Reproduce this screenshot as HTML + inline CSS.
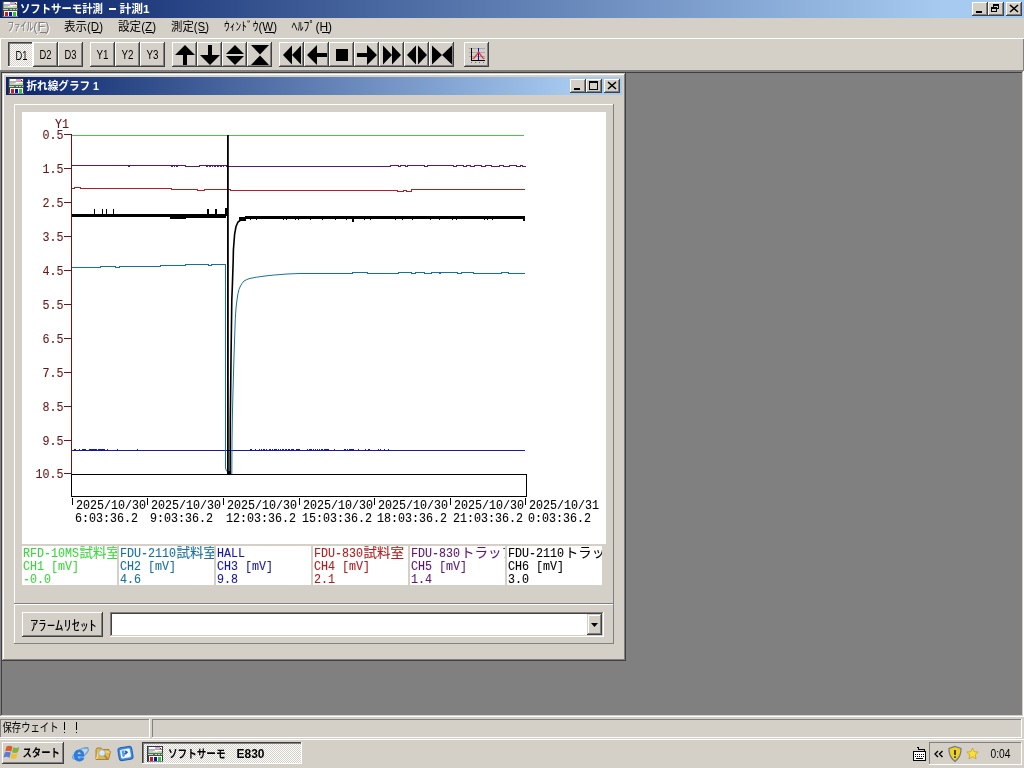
<!DOCTYPE html>
<html><head><meta charset="utf-8"><title>ソフトサーモ計測</title>
<style>
html,body{margin:0;padding:0;}
body{width:1024px;height:768px;overflow:hidden;position:relative;background:#D4D0C8;font-family:"Liberation Sans",sans-serif;}
div{position:absolute;box-sizing:border-box;}
svg{position:absolute;left:0;top:0;will-change:transform;}
</style></head><body>
<div style="left:0px;top:0px;width:1024px;height:18px;background:linear-gradient(to right,#0A246A,#A6CAF0 92%);"></div>
<div style="left:972px;top:2px;width:16px;height:14px;background:#D4D0C8;box-shadow:inset -1px -1px 0 #404040,inset 1px 1px 0 #FFFFFF,inset -2px -2px 0 #808080;"></div>
<div style="left:988px;top:2px;width:16px;height:14px;background:#D4D0C8;box-shadow:inset -1px -1px 0 #404040,inset 1px 1px 0 #FFFFFF,inset -2px -2px 0 #808080;"></div>
<div style="left:1006px;top:2px;width:16px;height:14px;background:#D4D0C8;box-shadow:inset -1px -1px 0 #404040,inset 1px 1px 0 #FFFFFF,inset -2px -2px 0 #808080;"></div>
<div style="left:0px;top:18px;width:1024px;height:20px;background:#D4D0C8;"></div>
<div style="left:0px;top:38px;width:1024px;height:1px;background:#FFFFFF;"></div>
<div style="left:0px;top:39px;width:1024px;height:31px;background:#D4D0C8;"></div>
<div style="left:1023px;top:39px;width:1px;height:31px;background:#808080;"></div>
<div style="left:0px;top:39px;width:1px;height:31px;background:#FFFFFF;"></div>
<div style="left:8px;top:42px;width:25px;height:25px;background:repeating-conic-gradient(#fff 0% 25%,#D4D0C8 0% 50%) 0 0/2px 2px;box-shadow:inset -1px -1px 0 #FFFFFF,inset 1px 1px 0 #404040,inset 2px 2px 0 #808080;"></div>
<div style="left:33px;top:42px;width:25px;height:25px;background:#D4D0C8;box-shadow:inset -1px -1px 0 #404040,inset 1px 1px 0 #FFFFFF,inset -2px -2px 0 #808080;"></div>
<div style="left:58px;top:42px;width:25px;height:25px;background:#D4D0C8;box-shadow:inset -1px -1px 0 #404040,inset 1px 1px 0 #FFFFFF,inset -2px -2px 0 #808080;"></div>
<div style="left:90px;top:42px;width:25px;height:25px;background:#D4D0C8;box-shadow:inset -1px -1px 0 #404040,inset 1px 1px 0 #FFFFFF,inset -2px -2px 0 #808080;"></div>
<div style="left:115px;top:42px;width:25px;height:25px;background:#D4D0C8;box-shadow:inset -1px -1px 0 #404040,inset 1px 1px 0 #FFFFFF,inset -2px -2px 0 #808080;"></div>
<div style="left:140px;top:42px;width:25px;height:25px;background:#D4D0C8;box-shadow:inset -1px -1px 0 #404040,inset 1px 1px 0 #FFFFFF,inset -2px -2px 0 #808080;"></div>
<div style="left:172px;top:42px;width:25px;height:25px;background:#D4D0C8;box-shadow:inset -1px -1px 0 #404040,inset 1px 1px 0 #FFFFFF,inset -2px -2px 0 #808080;"></div>
<div style="left:197px;top:42px;width:25px;height:25px;background:#D4D0C8;box-shadow:inset -1px -1px 0 #404040,inset 1px 1px 0 #FFFFFF,inset -2px -2px 0 #808080;"></div>
<div style="left:222px;top:42px;width:25px;height:25px;background:#D4D0C8;box-shadow:inset -1px -1px 0 #404040,inset 1px 1px 0 #FFFFFF,inset -2px -2px 0 #808080;"></div>
<div style="left:247px;top:42px;width:25px;height:25px;background:#D4D0C8;box-shadow:inset -1px -1px 0 #404040,inset 1px 1px 0 #FFFFFF,inset -2px -2px 0 #808080;"></div>
<div style="left:279px;top:42px;width:25px;height:25px;background:#D4D0C8;box-shadow:inset -1px -1px 0 #404040,inset 1px 1px 0 #FFFFFF,inset -2px -2px 0 #808080;"></div>
<div style="left:304px;top:42px;width:25px;height:25px;background:#D4D0C8;box-shadow:inset -1px -1px 0 #404040,inset 1px 1px 0 #FFFFFF,inset -2px -2px 0 #808080;"></div>
<div style="left:329px;top:42px;width:25px;height:25px;background:#D4D0C8;box-shadow:inset -1px -1px 0 #404040,inset 1px 1px 0 #FFFFFF,inset -2px -2px 0 #808080;"></div>
<div style="left:354px;top:42px;width:25px;height:25px;background:#D4D0C8;box-shadow:inset -1px -1px 0 #404040,inset 1px 1px 0 #FFFFFF,inset -2px -2px 0 #808080;"></div>
<div style="left:379px;top:42px;width:25px;height:25px;background:#D4D0C8;box-shadow:inset -1px -1px 0 #404040,inset 1px 1px 0 #FFFFFF,inset -2px -2px 0 #808080;"></div>
<div style="left:404px;top:42px;width:25px;height:25px;background:#D4D0C8;box-shadow:inset -1px -1px 0 #404040,inset 1px 1px 0 #FFFFFF,inset -2px -2px 0 #808080;"></div>
<div style="left:429px;top:42px;width:25px;height:25px;background:#D4D0C8;box-shadow:inset -1px -1px 0 #404040,inset 1px 1px 0 #FFFFFF,inset -2px -2px 0 #808080;"></div>
<div style="left:464px;top:42px;width:25px;height:25px;background:#D4D0C8;box-shadow:inset -1px -1px 0 #404040,inset 1px 1px 0 #FFFFFF,inset -2px -2px 0 #808080;"></div>
<div style="left:0px;top:70px;width:1024px;height:1px;background:#808080;"></div>
<div style="left:0px;top:71px;width:1024px;height:646px;background:#808080;box-shadow:inset -1px -1px 0 #FFFFFF,inset 1px 1px 0 #808080,inset -2px -2px 0 #D4D0C8,inset 2px 2px 0 #404040;"></div>
<div style="left:2px;top:73px;width:624px;height:588px;background:#D4D0C8;box-shadow:inset -1px -1px 0 #404040,inset 1px 1px 0 #D4D0C8,inset -2px -2px 0 #808080,inset 2px 2px 0 #FFFFFF;"></div>
<div style="left:6px;top:77px;width:616px;height:18px;background:linear-gradient(to right,#0A246A,#A6CAF0 92%);"></div>
<div style="left:570px;top:79px;width:16px;height:14px;background:#D4D0C8;box-shadow:inset -1px -1px 0 #404040,inset 1px 1px 0 #FFFFFF,inset -2px -2px 0 #808080;"></div>
<div style="left:586px;top:79px;width:16px;height:14px;background:#D4D0C8;box-shadow:inset -1px -1px 0 #404040,inset 1px 1px 0 #FFFFFF,inset -2px -2px 0 #808080;"></div>
<div style="left:604px;top:79px;width:16px;height:14px;background:#D4D0C8;box-shadow:inset -1px -1px 0 #404040,inset 1px 1px 0 #FFFFFF,inset -2px -2px 0 #808080;"></div>
<div style="left:14px;top:104px;width:600px;height:500px;box-shadow:inset -1px -1px 0 #808080,inset 1px 1px 0 #FFFFFF;"></div>
<div style="left:14px;top:604px;width:600px;height:40px;box-shadow:inset -1px -1px 0 #808080,inset 1px 1px 0 #FFFFFF;"></div>
<div style="left:22px;top:112px;width:584px;height:432px;background:#fff;"></div>
<div style="left:22px;top:546px;width:95px;height:39px;background:#fff;"></div>
<div style="left:119px;top:546px;width:95px;height:39px;background:#fff;"></div>
<div style="left:216px;top:546px;width:95px;height:39px;background:#fff;"></div>
<div style="left:313px;top:546px;width:95px;height:39px;background:#fff;"></div>
<div style="left:410px;top:546px;width:95px;height:39px;background:#fff;"></div>
<div style="left:507px;top:546px;width:95px;height:39px;background:#fff;"></div>
<div style="left:22px;top:612px;width:81px;height:25px;background:#D4D0C8;box-shadow:inset -1px -1px 0 #404040,inset 1px 1px 0 #FFFFFF,inset -2px -2px 0 #808080;"></div>
<div style="left:110px;top:612px;width:494px;height:25px;background:#fff;box-shadow:inset -1px -1px 0 #FFFFFF,inset 1px 1px 0 #808080,inset -2px -2px 0 #D4D0C8,inset 2px 2px 0 #404040;"></div>
<div style="left:587px;top:614px;width:15px;height:21px;background:#D4D0C8;box-shadow:inset -1px -1px 0 #404040,inset 1px 1px 0 #D4D0C8,inset -2px -2px 0 #808080,inset 2px 2px 0 #FFFFFF;"></div>
<div style="left:0px;top:717px;width:1024px;height:21px;background:#D4D0C8;"></div>
<div style="left:0px;top:719px;width:150px;height:19px;box-shadow:inset -1px -1px 0 #FFFFFF,inset 1px 1px 0 #808080;"></div>
<div style="left:152px;top:719px;width:870px;height:19px;box-shadow:inset -1px -1px 0 #FFFFFF,inset 1px 1px 0 #808080;"></div>
<div style="left:0px;top:738px;width:1024px;height:30px;background:#D4D0C8;"></div>
<div style="left:0px;top:739px;width:1024px;height:1px;background:#FFFFFF;"></div>
<div style="left:2px;top:742px;width:62px;height:22px;background:#D4D0C8;box-shadow:inset -1px -1px 0 #404040,inset 1px 1px 0 #FFFFFF,inset -2px -2px 0 #808080;"></div>
<div style="left:142px;top:742px;width:160px;height:22px;background:repeating-conic-gradient(#fff 0% 25%,#D4D0C8 0% 50%) 0 0/2px 2px;box-shadow:inset -1px -1px 0 #FFFFFF,inset 1px 1px 0 #404040,inset 2px 2px 0 #808080;"></div>
<div style="left:929px;top:742px;width:93px;height:23px;box-shadow:inset -1px -1px 0 #FFFFFF,inset 1px 1px 0 #808080;"></div>
<svg width="1024" height="768" viewBox="0 0 1024 768">
<g transform="translate(2,1)" shape-rendering="crispEdges"><rect x="0" y="0" width="16" height="16" fill="#303848"/><rect x="2" y="1" width="13" height="6" fill="#FFFFFF"/><rect x="1" y="1" width="1" height="6" fill="#8890A0"/><rect x="8" y="1" width="5" height="1" fill="#B8A8E8"/><rect x="13" y="2" width="1" height="1" fill="#402050"/><rect x="14" y="3" width="1" height="1" fill="#C06080"/><rect x="2" y="3" width="7" height="1" fill="#C8A0D8"/><rect x="8" y="2" width="5" height="1" fill="#D8B0D0"/><rect x="9" y="3" width="5" height="1" fill="#E09090"/><rect x="2" y="4" width="6" height="1" fill="#B8B0E0"/><rect x="2" y="5" width="13" height="2" fill="#A8E0A0"/><rect x="6" y="5" width="5" height="1" fill="#E8F0C0"/><rect x="1" y="7" width="15" height="1" fill="#607060"/><rect x="1" y="8" width="15" height="1" fill="#606870"/><rect x="1" y="8" width="1" height="1" fill="#C8D0D0"/><rect x="2" y="8" width="1" height="1" fill="#C8D0D0"/><rect x="3" y="8" width="1" height="1" fill="#C8D0D0"/><rect x="4" y="8" width="1" height="1" fill="#C8D0D0"/><rect x="5" y="8" width="1" height="1" fill="#C8D0D0"/><rect x="8" y="8" width="1" height="1" fill="#C8D0D0"/><rect x="9" y="8" width="1" height="1" fill="#C8D0D0"/><rect x="11" y="8" width="1" height="1" fill="#C8D0D0"/><rect x="12" y="8" width="1" height="1" fill="#C8D0D0"/><rect x="14" y="8" width="1" height="1" fill="#C8D0D0"/><rect x="1" y="9" width="15" height="1" fill="#505050"/><rect x="2" y="10" width="13" height="5" fill="#FFFFFF"/><rect x="1" y="10" width="1" height="5" fill="#503030"/><rect x="3" y="11" width="3" height="4" fill="#D01818"/><rect x="7" y="11" width="3" height="4" fill="#1010B0"/><rect x="11" y="11" width="3" height="4" fill="#20D020"/><rect x="1" y="15" width="15" height="1" fill="#8088A0"/></g>
<text x="20" y="13" font-family="'Liberation Sans','Noto Sans CJK JP',sans-serif" font-size="11.5" font-weight="bold" textLength="83" lengthAdjust="spacingAndGlyphs" fill="#fff">ソフトサーモ計測</text>
<rect x="109" y="8" width="7" height="2" fill="#fff"/>
<text x="119.500" y="13" font-family="'Liberation Sans','Noto Sans CJK JP',sans-serif" font-size="11.5" font-weight="bold" textLength="30" lengthAdjust="spacingAndGlyphs" fill="#fff">計測1</text>
<rect x="976" y="11" width="6" height="2" fill="#000"/>
<rect x="993.5" y="4.5" width="5" height="4" fill="none" stroke="#000"/>
<rect x="993" y="4" width="6" height="2" fill="#000"/>
<rect x="991.5" y="7.5" width="5" height="4" fill="#D4D0C8" stroke="#000"/>
<rect x="991" y="7" width="6" height="2" fill="#000"/>
<path d="M1010,5 l8,7 M1018,5 l-8,7" stroke="#000" stroke-width="1.6" fill="none" shape-rendering="auto"/>
<text x="8.500" y="32" font-family="'Liberation Sans','Noto Sans CJK JP',sans-serif" font-size="12" textLength="42" lengthAdjust="spacingAndGlyphs" fill="#fff">ﾌｧｲﾙ(F)</text>
<text x="7.500" y="31" font-family="'Liberation Sans','Noto Sans CJK JP',sans-serif" font-size="12" textLength="42" lengthAdjust="spacingAndGlyphs" fill="#808080">ﾌｧｲﾙ(F)</text>
<text x="64" y="31" font-family="'Liberation Sans','Noto Sans CJK JP',sans-serif" font-size="12" textLength="39" lengthAdjust="spacingAndGlyphs" fill="#000">表示(D)</text>
<text x="118" y="31" font-family="'Liberation Sans','Noto Sans CJK JP',sans-serif" font-size="12" textLength="38" lengthAdjust="spacingAndGlyphs" fill="#000">設定(Z)</text>
<text x="171" y="31" font-family="'Liberation Sans','Noto Sans CJK JP',sans-serif" font-size="12" textLength="38" lengthAdjust="spacingAndGlyphs" fill="#000">測定(S)</text>
<text x="224" y="31" font-family="'Liberation Sans','Noto Sans CJK JP',sans-serif" font-size="12" textLength="53" lengthAdjust="spacingAndGlyphs" fill="#000">ｳｨﾝﾄﾞｳ(W)</text>
<text x="291.500" y="31" font-family="'Liberation Sans','Noto Sans CJK JP',sans-serif" font-size="12" textLength="40.5" lengthAdjust="spacingAndGlyphs" fill="#000">ﾍﾙﾌﾟ(H)</text>
<rect x="40" y="32" width="6" height="1" fill="#808080"/>
<rect x="93" y="32" width="7" height="1" fill="#000"/>
<rect x="146" y="32" width="7" height="1" fill="#000"/>
<rect x="199" y="32" width="7" height="1" fill="#000"/>
<rect x="265" y="32" width="9" height="1" fill="#000"/>
<rect x="322" y="32" width="7" height="1" fill="#000"/>
<text x="21.5" y="60" font-family="Liberation Sans, sans-serif" font-size="12.5" text-anchor="middle" textLength="12" lengthAdjust="spacingAndGlyphs" fill="#000">D1</text>
<text x="45.5" y="59" font-family="Liberation Sans, sans-serif" font-size="12.5" text-anchor="middle" textLength="12" lengthAdjust="spacingAndGlyphs" fill="#000">D2</text>
<text x="70.5" y="59" font-family="Liberation Sans, sans-serif" font-size="12.5" text-anchor="middle" textLength="12" lengthAdjust="spacingAndGlyphs" fill="#000">D3</text>
<text x="102.5" y="59" font-family="Liberation Sans, sans-serif" font-size="12.5" text-anchor="middle" textLength="12" lengthAdjust="spacingAndGlyphs" fill="#000">Y1</text>
<text x="127.5" y="59" font-family="Liberation Sans, sans-serif" font-size="12.5" text-anchor="middle" textLength="12" lengthAdjust="spacingAndGlyphs" fill="#000">Y2</text>
<text x="152.5" y="59" font-family="Liberation Sans, sans-serif" font-size="12.5" text-anchor="middle" textLength="12" lengthAdjust="spacingAndGlyphs" fill="#000">Y3</text>
<polygon points="185,45 195,55 187,55 187,65 183,65 183,55 175,55" fill="#000"/>
<polygon points="208,45 212,45 212,55 220,55 210,65 200,55 208,55" fill="#000"/>
<polygon points="235,45 244,54 226,54" fill="#000"/>
<polygon points="226,56 244,56 235,65" fill="#000"/>
<polygon points="251,45 269,45 260,54.5" fill="#000"/>
<polygon points="260,55.5 269,65 251,65" fill="#000"/>
<polygon points="283,55 292,45.5 292,64.5" fill="#000"/>
<polygon points="292,55 301,45.5 301,64.5" fill="#000"/>
<polygon points="307,55 317,45 317,53 327,53 327,57 317,57 317,65" fill="#000"/>
<rect x="336" y="49" width="12" height="12" fill="#000"/>
<polygon points="357,53 367,53 367,45 377,55 367,65 367,57 357,57" fill="#000"/>
<polygon points="383,45.5 392,55 383,64.5" fill="#000"/>
<polygon points="392,45.5 401,55 392,64.5" fill="#000"/>
<polygon points="407,55 416,45.5 416,64.5" fill="#000"/>
<polygon points="418,45.5 427,55 418,64.5" fill="#000"/>
<polygon points="432,45.5 442,55 432,64.5" fill="#000"/>
<polygon points="452,45.5 442,55 452,64.5" fill="#000"/>
<g shape-rendering="crispEdges"><rect x="469" y="48" width="16" height="1" fill="#A8A8A8"/><rect x="469" y="52" width="16" height="1" fill="#A8A8A8"/><rect x="469" y="56" width="16" height="1" fill="#A8A8A8"/><rect x="471" y="48" width="1" height="13" fill="#000"/><rect x="471" y="60" width="14" height="1" fill="#000"/><rect x="471" y="62" width="1" height="1" fill="#707070"/><rect x="475" y="62" width="1" height="1" fill="#707070"/><rect x="479" y="62" width="1" height="1" fill="#707070"/><rect x="483" y="62" width="1" height="1" fill="#707070"/><rect x="478" y="48" width="1" height="12" fill="#1010C0"/></g><path d="M472.5,58.500 L474,58.200 L478.7,52.300 L483,58.200 L484.5,58.500" fill="none" stroke="#E83030" stroke-width="1.200"/>
<g transform="translate(8,78)" shape-rendering="crispEdges"><rect x="0" y="0" width="16" height="16" fill="#303848"/><rect x="2" y="1" width="13" height="6" fill="#FFFFFF"/><rect x="1" y="1" width="1" height="6" fill="#8890A0"/><rect x="8" y="1" width="5" height="1" fill="#B8A8E8"/><rect x="13" y="2" width="1" height="1" fill="#402050"/><rect x="14" y="3" width="1" height="1" fill="#C06080"/><rect x="2" y="3" width="7" height="1" fill="#C8A0D8"/><rect x="8" y="2" width="5" height="1" fill="#D8B0D0"/><rect x="9" y="3" width="5" height="1" fill="#E09090"/><rect x="2" y="4" width="6" height="1" fill="#B8B0E0"/><rect x="2" y="5" width="13" height="2" fill="#A8E0A0"/><rect x="6" y="5" width="5" height="1" fill="#E8F0C0"/><rect x="1" y="7" width="15" height="1" fill="#607060"/><rect x="1" y="8" width="15" height="1" fill="#606870"/><rect x="1" y="8" width="1" height="1" fill="#C8D0D0"/><rect x="2" y="8" width="1" height="1" fill="#C8D0D0"/><rect x="3" y="8" width="1" height="1" fill="#C8D0D0"/><rect x="4" y="8" width="1" height="1" fill="#C8D0D0"/><rect x="5" y="8" width="1" height="1" fill="#C8D0D0"/><rect x="8" y="8" width="1" height="1" fill="#C8D0D0"/><rect x="9" y="8" width="1" height="1" fill="#C8D0D0"/><rect x="11" y="8" width="1" height="1" fill="#C8D0D0"/><rect x="12" y="8" width="1" height="1" fill="#C8D0D0"/><rect x="14" y="8" width="1" height="1" fill="#C8D0D0"/><rect x="1" y="9" width="15" height="1" fill="#505050"/><rect x="2" y="10" width="13" height="5" fill="#FFFFFF"/><rect x="1" y="10" width="1" height="5" fill="#503030"/><rect x="3" y="11" width="3" height="4" fill="#D01818"/><rect x="7" y="11" width="3" height="4" fill="#1010B0"/><rect x="11" y="11" width="3" height="4" fill="#20D020"/><rect x="1" y="15" width="15" height="1" fill="#8088A0"/></g>
<text x="26.500" y="90" font-family="'Liberation Sans','Noto Sans CJK JP',sans-serif" font-size="11.5" font-weight="bold" textLength="72.5" lengthAdjust="spacingAndGlyphs" fill="#fff" xml:space="preserve">折れ線グラフ 1</text>
<rect x="574" y="88" width="6" height="2" fill="#000"/>
<rect x="589.5" y="81.5" width="8" height="8" fill="none" stroke="#000" stroke-width="1"/>
<rect x="589" y="81" width="9" height="2" fill="#000"/>
<path d="M608,82 l8,7 M616,82 l-8,7" stroke="#000" stroke-width="1.6" fill="none" shape-rendering="auto"/>
<clipPath id="lc0"><rect x="22" y="546" width="95" height="39"/></clipPath>
<g clip-path="url(#lc0)">
<text x="23" y="557" font-family="Liberation Mono, monospace" font-size="13" textLength="56" lengthAdjust="spacingAndGlyphs" fill="#40D440" stroke="#40D440" stroke-width="0.1" text-anchor="start" xml:space="preserve">RFD-10MS</text>
<text x="79.500" y="557" font-family="'Liberation Mono','Noto Sans CJK JP',monospace" font-size="13" textLength="40.5" lengthAdjust="spacingAndGlyphs" fill="#40D440" stroke="#40D440" stroke-width="0.1" text-anchor="start">試料室</text>
<text x="23" y="570" font-family="Liberation Mono, monospace" font-size="13" textLength="56" lengthAdjust="spacingAndGlyphs" fill="#40D440" stroke="#40D440" stroke-width="0.1" text-anchor="start" xml:space="preserve">CH1 [mV]</text>
<text x="23" y="583" font-family="Liberation Mono, monospace" font-size="13" textLength="28" lengthAdjust="spacingAndGlyphs" fill="#40D440" stroke="#40D440" stroke-width="0.1" text-anchor="start" xml:space="preserve">-0.0</text>
</g>
<clipPath id="lc1"><rect x="119" y="546" width="95" height="39"/></clipPath>
<g clip-path="url(#lc1)">
<text x="120" y="557" font-family="Liberation Mono, monospace" font-size="13" textLength="56" lengthAdjust="spacingAndGlyphs" fill="#1870A0" stroke="#1870A0" stroke-width="0.1" text-anchor="start" xml:space="preserve">FDU-2110</text>
<text x="176.500" y="557" font-family="'Liberation Mono','Noto Sans CJK JP',monospace" font-size="13" textLength="40.5" lengthAdjust="spacingAndGlyphs" fill="#1870A0" stroke="#1870A0" stroke-width="0.1" text-anchor="start">試料室</text>
<text x="120" y="570" font-family="Liberation Mono, monospace" font-size="13" textLength="56" lengthAdjust="spacingAndGlyphs" fill="#1870A0" stroke="#1870A0" stroke-width="0.1" text-anchor="start" xml:space="preserve">CH2 [mV]</text>
<text x="120" y="583" font-family="Liberation Mono, monospace" font-size="13" textLength="21" lengthAdjust="spacingAndGlyphs" fill="#1870A0" stroke="#1870A0" stroke-width="0.1" text-anchor="start" xml:space="preserve">4.6</text>
</g>
<clipPath id="lc2"><rect x="216" y="546" width="95" height="39"/></clipPath>
<g clip-path="url(#lc2)">
<text x="217" y="557" font-family="Liberation Mono, monospace" font-size="13" textLength="28" lengthAdjust="spacingAndGlyphs" fill="#1818A0" stroke="#1818A0" stroke-width="0.1" text-anchor="start" xml:space="preserve">HALL</text>
<text x="217" y="570" font-family="Liberation Mono, monospace" font-size="13" textLength="56" lengthAdjust="spacingAndGlyphs" fill="#1818A0" stroke="#1818A0" stroke-width="0.1" text-anchor="start" xml:space="preserve">CH3 [mV]</text>
<text x="217" y="583" font-family="Liberation Mono, monospace" font-size="13" textLength="21" lengthAdjust="spacingAndGlyphs" fill="#1818A0" stroke="#1818A0" stroke-width="0.1" text-anchor="start" xml:space="preserve">9.8</text>
</g>
<clipPath id="lc3"><rect x="313" y="546" width="95" height="39"/></clipPath>
<g clip-path="url(#lc3)">
<text x="314" y="557" font-family="Liberation Mono, monospace" font-size="13" textLength="49" lengthAdjust="spacingAndGlyphs" fill="#B02020" stroke="#B02020" stroke-width="0.1" text-anchor="start" xml:space="preserve">FDU-830</text>
<text x="363.500" y="557" font-family="'Liberation Mono','Noto Sans CJK JP',monospace" font-size="13" textLength="40.5" lengthAdjust="spacingAndGlyphs" fill="#B02020" stroke="#B02020" stroke-width="0.1" text-anchor="start">試料室</text>
<text x="314" y="570" font-family="Liberation Mono, monospace" font-size="13" textLength="56" lengthAdjust="spacingAndGlyphs" fill="#B02020" stroke="#B02020" stroke-width="0.1" text-anchor="start" xml:space="preserve">CH4 [mV]</text>
<text x="314" y="583" font-family="Liberation Mono, monospace" font-size="13" textLength="21" lengthAdjust="spacingAndGlyphs" fill="#B02020" stroke="#B02020" stroke-width="0.1" text-anchor="start" xml:space="preserve">2.1</text>
</g>
<clipPath id="lc4"><rect x="410" y="546" width="95" height="39"/></clipPath>
<g clip-path="url(#lc4)">
<text x="411" y="557" font-family="Liberation Mono, monospace" font-size="13" textLength="49" lengthAdjust="spacingAndGlyphs" fill="#5A1870" stroke="#5A1870" stroke-width="0.1" text-anchor="start" xml:space="preserve">FDU-830</text>
<text x="461" y="557" font-family="'Liberation Mono','Noto Sans CJK JP',monospace" font-size="13" textLength="54" lengthAdjust="spacingAndGlyphs" fill="#5A1870" stroke="#5A1870" stroke-width="0.1" text-anchor="start">トラップ</text>
<text x="411" y="570" font-family="Liberation Mono, monospace" font-size="13" textLength="56" lengthAdjust="spacingAndGlyphs" fill="#5A1870" stroke="#5A1870" stroke-width="0.1" text-anchor="start" xml:space="preserve">CH5 [mV]</text>
<text x="411" y="583" font-family="Liberation Mono, monospace" font-size="13" textLength="21" lengthAdjust="spacingAndGlyphs" fill="#5A1870" stroke="#5A1870" stroke-width="0.1" text-anchor="start" xml:space="preserve">1.4</text>
</g>
<clipPath id="lc5"><rect x="507" y="546" width="95" height="39"/></clipPath>
<g clip-path="url(#lc5)">
<text x="508" y="557" font-family="Liberation Mono, monospace" font-size="13" textLength="56" lengthAdjust="spacingAndGlyphs" fill="#000000" stroke="#000000" stroke-width="0.1" text-anchor="start" xml:space="preserve">FDU-2110</text>
<text x="565" y="557" font-family="'Liberation Mono','Noto Sans CJK JP',monospace" font-size="13" textLength="40" lengthAdjust="spacingAndGlyphs" fill="#000000" stroke="#000000" stroke-width="0.1" text-anchor="start">トラッ</text>
<text x="508" y="570" font-family="Liberation Mono, monospace" font-size="13" textLength="56" lengthAdjust="spacingAndGlyphs" fill="#000000" stroke="#000000" stroke-width="0.1" text-anchor="start" xml:space="preserve">CH6 [mV]</text>
<text x="508" y="583" font-family="Liberation Mono, monospace" font-size="13" textLength="21" lengthAdjust="spacingAndGlyphs" fill="#000000" stroke="#000000" stroke-width="0.1" text-anchor="start" xml:space="preserve">3.0</text>
</g>
<text x="30" y="630" font-family="'Liberation Sans','Noto Sans CJK JP',sans-serif" font-size="14" textLength="67" lengthAdjust="spacingAndGlyphs" fill="#000">ｱﾗｰﾑﾘｾｯﾄ</text>
<polygon points="591,623 598,623 594.5,627" fill="#000"/>
<g shape-rendering="crispEdges"><rect x="71" y="134" width="1" height="340" fill="#681616"/><rect x="64" y="134" width="7" height="1" fill="#681616"/><rect x="64" y="168" width="7" height="1" fill="#681616"/><rect x="64" y="202" width="7" height="1" fill="#681616"/><rect x="64" y="236" width="7" height="1" fill="#681616"/><rect x="64" y="270" width="7" height="1" fill="#681616"/><rect x="64" y="304" width="7" height="1" fill="#681616"/><rect x="64" y="338" width="7" height="1" fill="#681616"/><rect x="64" y="372" width="7" height="1" fill="#681616"/><rect x="64" y="406" width="7" height="1" fill="#681616"/><rect x="64" y="440" width="7" height="1" fill="#681616"/><rect x="64" y="473" width="7" height="1" fill="#681616"/><rect x="71.5" y="474.5" width="455" height="22" fill="none" stroke="#000" stroke-width="1"/><rect x="72" y="498" width="1" height="7" fill="#000"/><rect x="147" y="498" width="1" height="7" fill="#000"/><rect x="223" y="498" width="1" height="7" fill="#000"/><rect x="299" y="498" width="1" height="7" fill="#000"/><rect x="374" y="498" width="1" height="7" fill="#000"/><rect x="450" y="498" width="1" height="7" fill="#000"/><rect x="525" y="498" width="1" height="7" fill="#000"/></g>
<text x="55" y="127.5" font-family="Liberation Mono, monospace" font-size="13" textLength="14" lengthAdjust="spacingAndGlyphs" fill="#681616" stroke="#681616" stroke-width="0.1" text-anchor="start" xml:space="preserve">Y1</text>
<text x="63.5" y="139" font-family="Liberation Mono, monospace" font-size="13" textLength="21" lengthAdjust="spacingAndGlyphs" fill="#681616" stroke="#681616" stroke-width="0.1" text-anchor="end" xml:space="preserve">0.5</text>
<text x="63.5" y="173" font-family="Liberation Mono, monospace" font-size="13" textLength="21" lengthAdjust="spacingAndGlyphs" fill="#681616" stroke="#681616" stroke-width="0.1" text-anchor="end" xml:space="preserve">1.5</text>
<text x="63.5" y="207" font-family="Liberation Mono, monospace" font-size="13" textLength="21" lengthAdjust="spacingAndGlyphs" fill="#681616" stroke="#681616" stroke-width="0.1" text-anchor="end" xml:space="preserve">2.5</text>
<text x="63.5" y="241" font-family="Liberation Mono, monospace" font-size="13" textLength="21" lengthAdjust="spacingAndGlyphs" fill="#681616" stroke="#681616" stroke-width="0.1" text-anchor="end" xml:space="preserve">3.5</text>
<text x="63.5" y="275" font-family="Liberation Mono, monospace" font-size="13" textLength="21" lengthAdjust="spacingAndGlyphs" fill="#681616" stroke="#681616" stroke-width="0.1" text-anchor="end" xml:space="preserve">4.5</text>
<text x="63.5" y="309" font-family="Liberation Mono, monospace" font-size="13" textLength="21" lengthAdjust="spacingAndGlyphs" fill="#681616" stroke="#681616" stroke-width="0.1" text-anchor="end" xml:space="preserve">5.5</text>
<text x="63.5" y="343" font-family="Liberation Mono, monospace" font-size="13" textLength="21" lengthAdjust="spacingAndGlyphs" fill="#681616" stroke="#681616" stroke-width="0.1" text-anchor="end" xml:space="preserve">6.5</text>
<text x="63.5" y="377" font-family="Liberation Mono, monospace" font-size="13" textLength="21" lengthAdjust="spacingAndGlyphs" fill="#681616" stroke="#681616" stroke-width="0.1" text-anchor="end" xml:space="preserve">7.5</text>
<text x="63.5" y="411" font-family="Liberation Mono, monospace" font-size="13" textLength="21" lengthAdjust="spacingAndGlyphs" fill="#681616" stroke="#681616" stroke-width="0.1" text-anchor="end" xml:space="preserve">8.5</text>
<text x="63.5" y="445" font-family="Liberation Mono, monospace" font-size="13" textLength="21" lengthAdjust="spacingAndGlyphs" fill="#681616" stroke="#681616" stroke-width="0.1" text-anchor="end" xml:space="preserve">9.5</text>
<text x="63.5" y="478" font-family="Liberation Mono, monospace" font-size="13" textLength="28" lengthAdjust="spacingAndGlyphs" fill="#681616" stroke="#681616" stroke-width="0.1" text-anchor="end" xml:space="preserve">10.5</text>
<text x="76" y="509" font-family="Liberation Mono, monospace" font-size="13" textLength="70" lengthAdjust="spacingAndGlyphs" fill="#000" stroke="#000" stroke-width="0.1" text-anchor="start" xml:space="preserve">2025/10/30</text>
<text x="75" y="522" font-family="Liberation Mono, monospace" font-size="13" textLength="63" lengthAdjust="spacingAndGlyphs" fill="#000" stroke="#000" stroke-width="0.1" text-anchor="start" xml:space="preserve">6:03:36.2</text>
<text x="151" y="509" font-family="Liberation Mono, monospace" font-size="13" textLength="70" lengthAdjust="spacingAndGlyphs" fill="#000" stroke="#000" stroke-width="0.1" text-anchor="start" xml:space="preserve">2025/10/30</text>
<text x="150" y="522" font-family="Liberation Mono, monospace" font-size="13" textLength="63" lengthAdjust="spacingAndGlyphs" fill="#000" stroke="#000" stroke-width="0.1" text-anchor="start" xml:space="preserve">9:03:36.2</text>
<text x="227" y="509" font-family="Liberation Mono, monospace" font-size="13" textLength="70" lengthAdjust="spacingAndGlyphs" fill="#000" stroke="#000" stroke-width="0.1" text-anchor="start" xml:space="preserve">2025/10/30</text>
<text x="226" y="522" font-family="Liberation Mono, monospace" font-size="13" textLength="70" lengthAdjust="spacingAndGlyphs" fill="#000" stroke="#000" stroke-width="0.1" text-anchor="start" xml:space="preserve">12:03:36.2</text>
<text x="303" y="509" font-family="Liberation Mono, monospace" font-size="13" textLength="70" lengthAdjust="spacingAndGlyphs" fill="#000" stroke="#000" stroke-width="0.1" text-anchor="start" xml:space="preserve">2025/10/30</text>
<text x="302" y="522" font-family="Liberation Mono, monospace" font-size="13" textLength="70" lengthAdjust="spacingAndGlyphs" fill="#000" stroke="#000" stroke-width="0.1" text-anchor="start" xml:space="preserve">15:03:36.2</text>
<text x="378" y="509" font-family="Liberation Mono, monospace" font-size="13" textLength="70" lengthAdjust="spacingAndGlyphs" fill="#000" stroke="#000" stroke-width="0.1" text-anchor="start" xml:space="preserve">2025/10/30</text>
<text x="377" y="522" font-family="Liberation Mono, monospace" font-size="13" textLength="70" lengthAdjust="spacingAndGlyphs" fill="#000" stroke="#000" stroke-width="0.1" text-anchor="start" xml:space="preserve">18:03:36.2</text>
<text x="454" y="509" font-family="Liberation Mono, monospace" font-size="13" textLength="70" lengthAdjust="spacingAndGlyphs" fill="#000" stroke="#000" stroke-width="0.1" text-anchor="start" xml:space="preserve">2025/10/30</text>
<text x="453" y="522" font-family="Liberation Mono, monospace" font-size="13" textLength="70" lengthAdjust="spacingAndGlyphs" fill="#000" stroke="#000" stroke-width="0.1" text-anchor="start" xml:space="preserve">21:03:36.2</text>
<text x="529" y="509" font-family="Liberation Mono, monospace" font-size="13" textLength="70" lengthAdjust="spacingAndGlyphs" fill="#000" stroke="#000" stroke-width="0.1" text-anchor="start" xml:space="preserve">2025/10/31</text>
<text x="528" y="522" font-family="Liberation Mono, monospace" font-size="13" textLength="63" lengthAdjust="spacingAndGlyphs" fill="#000" stroke="#000" stroke-width="0.1" text-anchor="start" xml:space="preserve">0:03:36.2</text>
<polyline points="72,135.5 524,135.5" fill="none" stroke="#48C848" stroke-width="1" shape-rendering="crispEdges" stroke-linejoin="miter"/>
<polyline points="72,165.5 185,165.5 185,166.5 199,166.5 199,165.5 226,165.5 226,166.5 390,166.5 390,165.5 394,165.5 394,165.5 398,165.5 398,166.5 400,166.5 400,165.5 403,165.5 403,165.5 405,165.5 405,166.5 407,166.5 407,165.5 413,165.5 413,165.5 419,165.5 419,165.5 421,165.5 421,165.5 424,165.5 424,166.5 427,166.5 427,165.5 431,165.5 431,165.5 437,165.5 437,165.5 439,165.5 439,165.5 445,165.5 445,165.5 448,165.5 448,165.5 450,165.5 450,165.5 453,165.5 453,166.5 456,166.5 456,165.5 460,165.5 460,165.5 463,165.5 463,166.5 466,166.5 466,165.5 470,165.5 470,166.5 474,166.5 474,165.5 477,165.5 477,165.5 481,165.5 481,166.5 485,166.5 485,165.5 487,165.5 487,165.5 491,165.5 491,166.5 495,166.5 495,166.5 499,166.5 499,165.5 503,165.5 503,166.5 509,166.5 509,165.5 512,165.5 512,165.5 516,165.5 516,166.5 520,166.5 520,165.5 522,165.5 522,166.5 525,166.5 525,165.5" fill="none" stroke="#5A1870" stroke-width="1" shape-rendering="crispEdges" stroke-linejoin="miter"/>
<g shape-rendering="crispEdges"><rect x="128" y="166" width="1" height="1" fill="#5A1870"/><rect x="129" y="166" width="1" height="1" fill="#5A1870"/><rect x="171" y="166" width="1" height="1" fill="#5A1870"/><rect x="172" y="166" width="1" height="1" fill="#5A1870"/><rect x="174" y="166" width="1" height="1" fill="#5A1870"/><rect x="176" y="166" width="1" height="1" fill="#5A1870"/><rect x="177" y="166" width="1" height="1" fill="#5A1870"/><rect x="196" y="166" width="1" height="1" fill="#5A1870"/><rect x="206" y="166" width="1" height="1" fill="#5A1870"/><rect x="207" y="166" width="1" height="1" fill="#5A1870"/><rect x="209" y="166" width="1" height="1" fill="#5A1870"/><rect x="210" y="166" width="1" height="1" fill="#5A1870"/><rect x="212" y="166" width="1" height="1" fill="#5A1870"/><rect x="214" y="166" width="1" height="1" fill="#5A1870"/><rect x="215" y="166" width="1" height="1" fill="#5A1870"/><rect x="217" y="166" width="1" height="1" fill="#5A1870"/><rect x="218" y="166" width="1" height="1" fill="#5A1870"/><rect x="220" y="166" width="1" height="1" fill="#5A1870"/><rect x="221" y="166" width="1" height="1" fill="#5A1870"/><rect x="223" y="166" width="1" height="1" fill="#5A1870"/><rect x="260" y="166" width="1" height="1" fill="#5A1870"/><rect x="261" y="166" width="1" height="1" fill="#5A1870"/></g>
<polyline points="72,188.5 74,188.5 74,187.5 80,187.5 80,188.5 171,188.5 171,189.5 197,189.5 197,190.5 204,190.5 204,189.5 230,189.5 230,190.5 397,190.5 397,191.5 403,191.5 403,190.5 406,190.5 406,191.5 411,191.5 411,189.5 525,189.5" fill="none" stroke="#B02020" stroke-width="1" shape-rendering="crispEdges" stroke-linejoin="miter"/>
<polyline points="72,450.5 525,450.5" fill="none" stroke="#1818A0" stroke-width="1.2" shape-rendering="crispEdges" stroke-linejoin="miter"/>
<g shape-rendering="crispEdges"><rect x="74" y="449" width="1" height="1" fill="#1818A0"/><rect x="75" y="449" width="1" height="1" fill="#1818A0"/><rect x="79" y="449" width="1" height="1" fill="#1818A0"/><rect x="82" y="449" width="1" height="1" fill="#1818A0"/><rect x="83" y="449" width="1" height="1" fill="#1818A0"/><rect x="84" y="449" width="1" height="1" fill="#1818A0"/><rect x="85" y="449" width="1" height="1" fill="#1818A0"/><rect x="89" y="449" width="1" height="1" fill="#1818A0"/><rect x="90" y="449" width="1" height="1" fill="#1818A0"/><rect x="91" y="449" width="1" height="1" fill="#1818A0"/><rect x="92" y="449" width="1" height="1" fill="#1818A0"/><rect x="93" y="449" width="1" height="1" fill="#1818A0"/><rect x="94" y="449" width="1" height="1" fill="#1818A0"/><rect x="95" y="449" width="1" height="1" fill="#1818A0"/><rect x="96" y="449" width="1" height="1" fill="#1818A0"/><rect x="98" y="449" width="1" height="1" fill="#1818A0"/><rect x="99" y="449" width="1" height="1" fill="#1818A0"/><rect x="100" y="449" width="1" height="1" fill="#1818A0"/><rect x="101" y="449" width="1" height="1" fill="#1818A0"/><rect x="102" y="449" width="1" height="1" fill="#1818A0"/><rect x="103" y="449" width="1" height="1" fill="#1818A0"/><rect x="104" y="449" width="1" height="1" fill="#1818A0"/><rect x="107" y="449" width="1" height="1" fill="#1818A0"/><rect x="117" y="449" width="1" height="1" fill="#1818A0"/><rect x="137" y="449" width="1" height="1" fill="#1818A0"/><rect x="250" y="449" width="1" height="1" fill="#1818A0"/><rect x="251" y="449" width="1" height="1" fill="#1818A0"/><rect x="255" y="449" width="1" height="1" fill="#1818A0"/><rect x="259" y="449" width="1" height="1" fill="#1818A0"/><rect x="261" y="449" width="1" height="1" fill="#1818A0"/><rect x="263" y="449" width="1" height="1" fill="#1818A0"/><rect x="264" y="449" width="1" height="1" fill="#1818A0"/><rect x="266" y="449" width="1" height="1" fill="#1818A0"/><rect x="269" y="449" width="1" height="1" fill="#1818A0"/><rect x="270" y="449" width="1" height="1" fill="#1818A0"/><rect x="272" y="449" width="1" height="1" fill="#1818A0"/><rect x="274" y="449" width="1" height="1" fill="#1818A0"/><rect x="275" y="449" width="1" height="1" fill="#1818A0"/><rect x="276" y="449" width="1" height="1" fill="#1818A0"/><rect x="278" y="449" width="1" height="1" fill="#1818A0"/><rect x="280" y="449" width="1" height="1" fill="#1818A0"/><rect x="282" y="449" width="1" height="1" fill="#1818A0"/><rect x="283" y="449" width="1" height="1" fill="#1818A0"/><rect x="285" y="449" width="1" height="1" fill="#1818A0"/><rect x="286" y="449" width="1" height="1" fill="#1818A0"/><rect x="288" y="449" width="1" height="1" fill="#1818A0"/><rect x="289" y="449" width="1" height="1" fill="#1818A0"/><rect x="291" y="449" width="1" height="1" fill="#1818A0"/><rect x="292" y="449" width="1" height="1" fill="#1818A0"/><rect x="293" y="449" width="1" height="1" fill="#1818A0"/><rect x="296" y="449" width="1" height="1" fill="#1818A0"/><rect x="297" y="449" width="1" height="1" fill="#1818A0"/><rect x="298" y="449" width="1" height="1" fill="#1818A0"/><rect x="299" y="449" width="1" height="1" fill="#1818A0"/><rect x="307" y="449" width="1" height="1" fill="#1818A0"/><rect x="309" y="449" width="1" height="1" fill="#1818A0"/><rect x="310" y="449" width="1" height="1" fill="#1818A0"/><rect x="311" y="449" width="1" height="1" fill="#1818A0"/><rect x="313" y="449" width="1" height="1" fill="#1818A0"/><rect x="315" y="449" width="1" height="1" fill="#1818A0"/><rect x="317" y="449" width="1" height="1" fill="#1818A0"/><rect x="319" y="449" width="1" height="1" fill="#1818A0"/><rect x="321" y="449" width="1" height="1" fill="#1818A0"/><rect x="322" y="449" width="1" height="1" fill="#1818A0"/><rect x="324" y="449" width="1" height="1" fill="#1818A0"/><rect x="325" y="449" width="1" height="1" fill="#1818A0"/><rect x="326" y="449" width="1" height="1" fill="#1818A0"/><rect x="327" y="449" width="1" height="1" fill="#1818A0"/><rect x="328" y="449" width="1" height="1" fill="#1818A0"/><rect x="334" y="449" width="1" height="1" fill="#1818A0"/><rect x="344" y="449" width="1" height="1" fill="#1818A0"/><rect x="345" y="449" width="1" height="1" fill="#1818A0"/><rect x="347" y="449" width="1" height="1" fill="#1818A0"/><rect x="349" y="449" width="1" height="1" fill="#1818A0"/><rect x="350" y="449" width="1" height="1" fill="#1818A0"/><rect x="351" y="449" width="1" height="1" fill="#1818A0"/><rect x="352" y="449" width="1" height="1" fill="#1818A0"/><rect x="353" y="449" width="1" height="1" fill="#1818A0"/><rect x="358" y="449" width="1" height="1" fill="#1818A0"/><rect x="365" y="449" width="1" height="1" fill="#1818A0"/><rect x="368" y="449" width="1" height="1" fill="#1818A0"/><rect x="369" y="449" width="1" height="1" fill="#1818A0"/><rect x="378" y="449" width="1" height="1" fill="#1818A0"/><rect x="380" y="449" width="1" height="1" fill="#1818A0"/><rect x="384" y="449" width="1" height="1" fill="#1818A0"/><rect x="388" y="449" width="1" height="1" fill="#1818A0"/></g>
<polyline points="72,267.5 100,267.5 100,266.5 115,266.5 115,267.5 119,267.5 119,266.5 160,266.5 160,265.5 185,265.5 185,264.5 208,264.5 208,265.5 211,265.5 211,264.5 225.5,264.5" fill="none" stroke="#1870A0" stroke-width="1" shape-rendering="crispEdges" stroke-linejoin="miter"/>
<polyline points="225.5,264 225.5,468 226.5,471 228,472" fill="none" stroke="#1870A0" stroke-width="1" stroke-linejoin="miter"/>
<polyline points="231.8,474 232,440 232.5,410 233.4,377 234.2,350 235.3,318.6 236.1,307 237.1,299 238,293.5 239,289.3 240.5,286 242,283.4 244,281 246.9,279.5 250,278.4 256.6,277.2 265,276 274.2,275 287,274 300,273.5" fill="none" stroke="#1870A0" stroke-width="1" stroke-linejoin="miter"/>
<polyline points="300,273.5 352,273.5 352,272.5 367,272.5 367,273.5 398,273.5 398,272.5 411,272.5 411,273.5 415,273.5 415,272.5 424,272.5 424,273.5 431,273.5 431,272.5 439,272.5 439,273.5 440,273.5 440,272.5 457,272.5 457,273.5 461,273.5 461,272.5 473,272.5 473,273.5 501,273.5 501,272.5 508,272.5 508,273.5 525,273.5" fill="none" stroke="#1870A0" stroke-width="1" shape-rendering="crispEdges" stroke-linejoin="miter"/>
<g shape-rendering="crispEdges"><rect x="72" y="213.5" width="154" height="3.5" fill="#000"/><rect x="170" y="215" width="16" height="4" fill="#000"/><rect x="186" y="214" width="40" height="4" fill="#000"/><rect x="94" y="209" width="1" height="5" fill="#000"/><rect x="102" y="209" width="1" height="5" fill="#000"/><rect x="106" y="209" width="1" height="5" fill="#000"/><rect x="113" y="209" width="1" height="5" fill="#000"/><rect x="207" y="209" width="1" height="5" fill="#000"/><rect x="208" y="209" width="1" height="5" fill="#000"/><rect x="215" y="209" width="1" height="5" fill="#000"/><rect x="216" y="209" width="1" height="5" fill="#000"/><rect x="225" y="208" width="2" height="8" fill="#000"/></g><g><rect x="227" y="135" width="1.8" height="339" fill="#000"/></g><g shape-rendering="crispEdges"><rect x="228" y="471" width="3" height="3" fill="#000"/><rect x="245" y="216" width="280" height="3" fill="#000"/><rect x="239" y="217" width="7" height="4" fill="#000"/><rect x="250" y="219" width="1" height="1" fill="#000"/><rect x="256" y="219" width="1" height="1" fill="#000"/><rect x="283" y="219" width="1" height="1" fill="#000"/><rect x="286" y="219" width="1" height="1" fill="#000"/><rect x="295" y="219" width="1" height="1" fill="#000"/><rect x="298" y="219" width="1" height="1" fill="#000"/><rect x="310" y="219" width="1" height="1" fill="#000"/><rect x="322" y="219" width="1" height="1" fill="#000"/><rect x="335" y="219" width="1" height="1" fill="#000"/><rect x="346" y="219" width="1" height="1" fill="#000"/><rect x="364" y="219" width="1" height="1" fill="#000"/><rect x="370" y="219" width="1" height="1" fill="#000"/><rect x="395" y="219" width="1" height="1" fill="#000"/><rect x="402" y="219" width="1" height="1" fill="#000"/><rect x="412" y="219" width="1" height="1" fill="#000"/><rect x="430" y="219" width="1" height="1" fill="#000"/><rect x="439" y="219" width="1" height="1" fill="#000"/><rect x="452" y="219" width="1" height="1" fill="#000"/><rect x="456" y="219" width="1" height="1" fill="#000"/><rect x="484" y="219" width="1" height="1" fill="#000"/><rect x="487" y="219" width="1" height="1" fill="#000"/><rect x="492" y="219" width="1" height="1" fill="#000"/><rect x="352" y="219" width="2" height="3" fill="#000"/><rect x="523" y="219" width="2" height="2" fill="#000"/></g>
<polyline points="230.1,474 230.3,420 231,360 231.8,300 232.4,285 233.2,260 233.4,250 234.6,234.4 236,226.5 238,222 240,220.5 244,219.5" fill="none" stroke="#000" stroke-width="1.6" stroke-linejoin="miter"/>
<text x="2.500" y="732" font-family="'Liberation Sans','Noto Sans CJK JP',sans-serif" font-size="12" textLength="56" lengthAdjust="spacingAndGlyphs" fill="#000">保存ウェイト</text>
<rect x="64" y="722" width="1" height="8" fill="#000"/>
<rect x="64" y="732" width="1" height="1" fill="#000"/>
<rect x="76" y="722" width="1" height="8" fill="#000"/>
<rect x="76" y="732" width="1" height="1" fill="#000"/>
<text x="22.500" y="757" font-family="'Liberation Sans','Noto Sans CJK JP',sans-serif" font-size="11.5" font-weight="bold" textLength="37.5" lengthAdjust="spacingAndGlyphs" fill="#000">スタート</text>
<g><path d="M6.500,746.500 q3,-1.800 6,0.200 l-1.300,5 q-3,-2 -6,-0.200z" fill="#DC5A2C"/><path d="M13.300,747.200 q3,1.800 6,-0.300 l-1.300,5 q-3,2.100 -6,0.300z" fill="#7CB43C"/><path d="M4.800,752.500 q3,-1.800 6,0.200 l-1.300,5 q-3,-2 -6,-0.200z" fill="#5C7CD4"/><path d="M11.600,753.200 q3,1.800 6,-0.300 l-1.300,5 q-3,2.100 -6,0.300z" fill="#ECC038"/></g>
<g><ellipse cx="80.500" cy="753.500" rx="9" ry="3.600" transform="rotate(-32 80.500 753.500)" fill="none" stroke="#58A8F0" stroke-width="1.300"/><text x="73.500" y="760.500" font-family="Liberation Sans, sans-serif" font-weight="bold" font-size="20" fill="#2A7CE0" stroke="#2A7CE0" stroke-width="0.800">e</text><path d="M84.500,748.700 q3,-2 3.600,-0.300" stroke="#58A8F0" stroke-width="1.300" fill="none"/></g>
<g><path d="M96,749.5 l1,-1.500 h4 l1.500,1.500 h6.500 v2 h1.500 l-2,8 h-12.500z" fill="#E4B848" stroke="#9C7420" stroke-width="0.800"/><path d="M96.500,759 l2,-7 h11.500" fill="none" stroke="#F8E8A0" stroke-width="1"/><circle cx="102" cy="753" r="3.300" fill="#D4E8F4" stroke="#98A8B8" stroke-width="0.900"/><path d="M104.500,755.500 l3,3.500" stroke="#A08040" stroke-width="1.500"/></g>
<g transform="rotate(-10 125.500 753.500)"><rect x="118.500" y="747" width="14" height="13" rx="3" fill="#3C8CE4" stroke="#2060B8"/><rect x="120.500" y="749" width="10" height="9" rx="1.500" fill="#F0F6FF"/><path d="M123,756 q0.500,-3 4,-3.500 M125.200,750.800 l2.300,1.700 l-2.300,1.700" stroke="#2858B0" stroke-width="1.200" fill="none"/><rect x="122" y="750" width="2.500" height="6" fill="#5CA0E8"/></g>
<g transform="translate(147,746)" shape-rendering="crispEdges"><rect x="0" y="0" width="16" height="16" fill="#303848"/><rect x="2" y="1" width="13" height="6" fill="#FFFFFF"/><rect x="1" y="1" width="1" height="6" fill="#8890A0"/><rect x="8" y="1" width="5" height="1" fill="#B8A8E8"/><rect x="13" y="2" width="1" height="1" fill="#402050"/><rect x="14" y="3" width="1" height="1" fill="#C06080"/><rect x="2" y="3" width="7" height="1" fill="#C8A0D8"/><rect x="8" y="2" width="5" height="1" fill="#D8B0D0"/><rect x="9" y="3" width="5" height="1" fill="#E09090"/><rect x="2" y="4" width="6" height="1" fill="#B8B0E0"/><rect x="2" y="5" width="13" height="2" fill="#A8E0A0"/><rect x="6" y="5" width="5" height="1" fill="#E8F0C0"/><rect x="1" y="7" width="15" height="1" fill="#607060"/><rect x="1" y="8" width="15" height="1" fill="#606870"/><rect x="1" y="8" width="1" height="1" fill="#C8D0D0"/><rect x="2" y="8" width="1" height="1" fill="#C8D0D0"/><rect x="3" y="8" width="1" height="1" fill="#C8D0D0"/><rect x="4" y="8" width="1" height="1" fill="#C8D0D0"/><rect x="5" y="8" width="1" height="1" fill="#C8D0D0"/><rect x="8" y="8" width="1" height="1" fill="#C8D0D0"/><rect x="9" y="8" width="1" height="1" fill="#C8D0D0"/><rect x="11" y="8" width="1" height="1" fill="#C8D0D0"/><rect x="12" y="8" width="1" height="1" fill="#C8D0D0"/><rect x="14" y="8" width="1" height="1" fill="#C8D0D0"/><rect x="1" y="9" width="15" height="1" fill="#505050"/><rect x="2" y="10" width="13" height="5" fill="#FFFFFF"/><rect x="1" y="10" width="1" height="5" fill="#503030"/><rect x="3" y="11" width="3" height="4" fill="#D01818"/><rect x="7" y="11" width="3" height="4" fill="#1010B0"/><rect x="11" y="11" width="3" height="4" fill="#20D020"/><rect x="1" y="15" width="15" height="1" fill="#8088A0"/></g>
<text x="168" y="758" font-family="'Liberation Sans','Noto Sans CJK JP',sans-serif" font-size="11.5" font-weight="bold" textLength="57.5" lengthAdjust="spacingAndGlyphs" fill="#000">ソフトサーモ</text>
<text x="236.500" y="758" font-family="Liberation Sans, sans-serif" font-weight="bold" font-size="12" textLength="28" lengthAdjust="spacingAndGlyphs" fill="#000">E830</text>
<g shape-rendering="crispEdges"><rect x="913.500" y="751.5" width="12" height="9" rx="1" fill="#fff" stroke="#000"/><rect x="915" y="754" width="1" height="1" fill="#000"/><rect x="915" y="756" width="1" height="1" fill="#000"/><rect x="917" y="754" width="1" height="1" fill="#000"/><rect x="917" y="756" width="1" height="1" fill="#000"/><rect x="919" y="754" width="1" height="1" fill="#000"/><rect x="919" y="756" width="1" height="1" fill="#000"/><rect x="921" y="754" width="1" height="1" fill="#000"/><rect x="921" y="756" width="1" height="1" fill="#000"/><rect x="923" y="754" width="1" height="1" fill="#000"/><rect x="923" y="756" width="1" height="1" fill="#000"/><rect x="916" y="758" width="7" height="1" fill="#000"/><path d="M917,747.5 h1 v2 h6 v1" stroke="#000" fill="none"/></g>
<path d="M938,751 l-3,3 l3,3 M942.5,751 l-3,3 l3,3" stroke="#000" stroke-width="1.4" fill="none"/>
<g><path d="M955,746.5 l6,2 q0.5,8 -6,13 q-6.500,-5 -6,-13z" fill="#F0D020" stroke="#707888" stroke-width="1.2"/><rect x="954.200" y="750" width="1.6" height="5" fill="#202020"/><rect x="954.200" y="756.3" width="1.6" height="1.6" fill="#202020"/></g>
<path d="M972.500,748 l1.700,3.700 l4,0.400 l-3,2.700 l0.900,4 l-3.600,-2.100 l-3.600,2.100 l0.900,-4 l-3,-2.700 l4,-0.400z" fill="#F8E040" stroke="#C8A020" stroke-width="0.8"/>
<text x="990.500" y="758" font-family="Liberation Sans, sans-serif" font-size="12.5" textLength="20" lengthAdjust="spacingAndGlyphs" fill="#000">0:04</text>
</svg>
</body></html>
